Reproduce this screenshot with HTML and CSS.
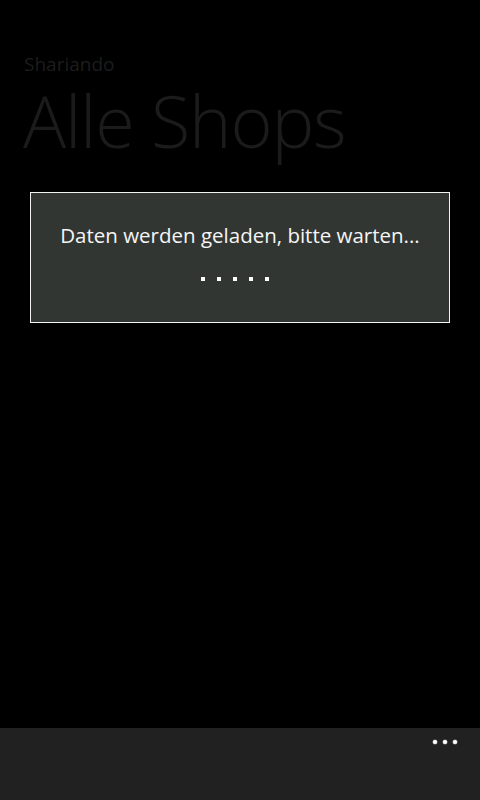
FILE: index.html
```html
<!DOCTYPE html>
<html lang="de">
<head>
<meta charset="utf-8">
<link rel="stylesheet" href="styles.css">
</head>
<body>
<div class="screen">
  <main class="page">
    <header class="header">
      <div class="app-name">Shariando</div>
      <h1 class="page-title">Alle Shops</h1>
    </header>
    <div class="loading-box">
      <div class="loading-text">Daten werden geladen, bitte warten...</div>
      <div class="progress">
        <span class="dot"></span><span class="dot"></span><span class="dot"></span><span class="dot"></span><span class="dot"></span>
      </div>
    </div>
  </main>
  <footer class="app-bar">
    <div class="more">
      <span class="mdot"></span><span class="mdot"></span><span class="mdot"></span>
    </div>
  </footer>
</div>
</body>
</html>
```
FILE: styles.css
```css
html, body {
  margin: 0;
  padding: 0;
  background: #000;
}
.screen {
  width: 480px;
  height: 800px;
  display: flex;
  flex-direction: column;
  font-family: "Open Sans", "Noto Sans", sans-serif;
}
.page {
  flex: 1;
  display: flex;
  flex-direction: column;
}
.header {
  padding: 52px 0 0 24px;
}
.app-name {
  font-size: 19px;
  line-height: 24px;
  color: #1d1d1d;
  font-weight: 400;
}
.page-title {
  margin: 2px 0 0 -1px;
  font-size: 72px;
  font-weight: 300;
  line-height: 84px;
  color: #1b1b1b;
  letter-spacing: -1.2px;
}
.loading-box {
  margin: 30px 30px 0 30px;
  height: 129px;
  border: 1px solid #f2f2f2;
  background: #323633;
  display: flex;
  flex-direction: column;
  align-items: center;
}
.loading-text {
  margin-top: 27px;
  color: #f5f5f5;
  font-size: 20.5px;
  line-height: 30px;
}
.progress {
  margin-top: 27px;
  display: flex;
  gap: 12px;
  margin-right: 10px;
}
.dot {
  width: 4px;
  height: 4px;
  background: #fff;
}
.app-bar {
  height: 72px;
  background: #212121;
  display: flex;
  justify-content: flex-end;
  align-items: flex-start;
}
.more {
  display: flex;
  gap: 6px;
  margin: 12px 23px 0 0;
}
.mdot {
  width: 4px;
  height: 4px;
  background: #fff;
  border-radius: 50%;
  box-shadow: 0 0 0 0.5px rgba(255,255,255,0.5);
}
```
